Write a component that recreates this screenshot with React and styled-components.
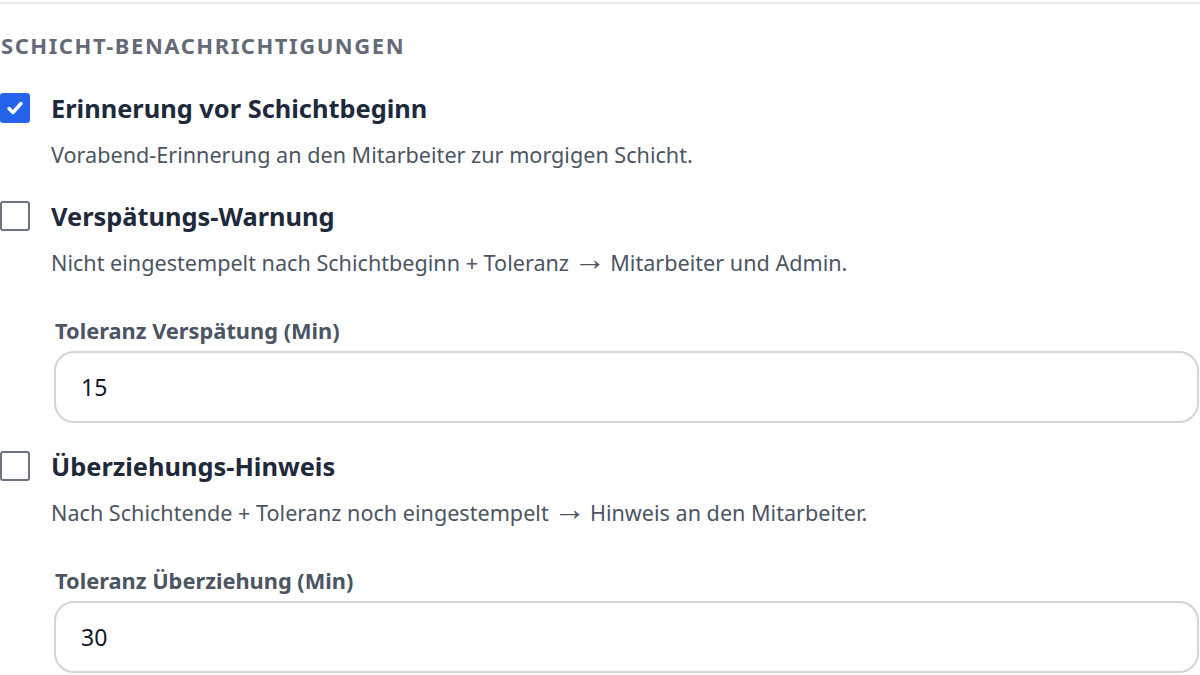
import React from "react";
import styled, { createGlobalStyle } from "styled-components";

const GlobalStyle = createGlobalStyle`
  html, body {
    margin: 0;
    padding: 0;
    background: #ffffff;
  }
  body {
    font-family: "Noto Sans", "Open Sans", sans-serif;
    color: #1f2937;
  }
`;

const Section = styled.section`
  width: 1200px;
  padding-top: 2px;
  box-sizing: border-box;
`;

const Divider = styled.div`
  border-top: 2px solid #e5e7eb;
`;

const Heading = styled.h3`
  margin: 27px 0 33px;
  font-size: 22px;
  line-height: 28px;
  font-weight: 700;
  letter-spacing: 1.55px;
  text-transform: uppercase;
  color: #646b78;
  padding-left: 1px;
`;

const Option = styled.div`
  display: flex;
  flex-direction: column;
  margin-bottom: ${(p) => p.$gapAfter}px;
`;

const OptionHead = styled.label`
  display: flex;
  align-items: center;
  gap: 21px;
  height: 32px;
  cursor: pointer;
`;

const Box = styled.span`
  width: 30px;
  height: 30px;
  box-sizing: border-box;
  flex: none;
  display: flex;
  align-items: center;
  justify-content: center;
  border-radius: 3px;
  border: 2px solid ${(p) => (p.$checked ? "#2563eb" : "#6b7280")};
  background: ${(p) => (p.$checked ? "#2563eb" : "#ffffff")};
`;

const Title = styled.span`
  font-size: 25.4px;
  line-height: 32px;
  font-weight: 700;
  color: #1e293b;
`;

const Description = styled.p`
  margin: 17px 0 0 51px;
  font-size: 21.6px;
  line-height: 28px;
  color: #4b5563;
`;

const Arrow = styled.span`
  line-height: 0;
  font-size: 1.5em;
  margin: 0 -1.2px;
  position: relative;
  top: -1px;
`;

const Field = styled.div`
  margin: 40px 0 0 54px;
  display: flex;
  flex-direction: column;
  gap: 6px;
`;

const FieldLabel = styled.label`
  font-size: 21.8px;
  line-height: 28px;
  font-weight: 700;
  color: #4b5563;
  padding-left: 1px;
`;

const NumberInput = styled.input`
  box-sizing: border-box;
  width: 1145px;
  height: 72px;
  border: 2px solid #d1d5db;
  border-radius: 20px;
  padding: 0 25px;
  font-family: inherit;
  font-size: 23px;
  color: #111827;
  background: #ffffff;
  outline: none;
`;

function Check({ checked }) {
  return (
    <Box $checked={checked}>
      {checked && (
        <svg width="20" height="20" viewBox="0 0 20 20" fill="none">
          <path
            d="M4 10.5l4 4 8-9"
            stroke="#ffffff"
            strokeWidth="3.4"
            strokeLinecap="round"
            strokeLinejoin="round"
          />
        </svg>
      )}
    </Box>
  );
}

const options = [
  {
    title: "Erinnerung vor Schichtbeginn",
    text: ["Vorabend-Erinnerung an den Mitarbeiter zur morgigen Schicht."],
    checked: true,
    gapAfter: 31,
  },
  {
    title: "Verspätungs-Warnung",
    text: ["Nicht eingestempelt nach Schichtbeginn + Toleranz ", " Mitarbeiter und Admin."],
    checked: false,
    field: { label: "Toleranz Verspätung (Min)", value: "15" },
    gapAfter: 27,
  },
  {
    title: "Überziehungs-Hinweis",
    text: ["Nach Schichtende + Toleranz noch eingestempelt ", " Hinweis an den Mitarbeiter."],
    checked: false,
    field: { label: "Toleranz Überziehung (Min)", value: "30" },
    gapAfter: 0,
  },
];

export default function App() {
  return (
    <>
      <GlobalStyle />
      <Section>
        <Divider />
        <Heading>Schicht-Benachrichtigungen</Heading>
        {options.map((o) => (
          <Option key={o.title} $gapAfter={o.gapAfter}>
            <OptionHead>
              <Check checked={o.checked} />
              <Title>{o.title}</Title>
            </OptionHead>
            <Description>
              {o.text[0]}
              {o.text.length > 1 && (
                <>
                  <Arrow>→</Arrow>
                  {o.text[1]}
                </>
              )}
            </Description>
            {o.field && (
              <Field>
                <FieldLabel>{o.field.label}</FieldLabel>
                <NumberInput type="text" defaultValue={o.field.value} />
              </Field>
            )}
          </Option>
        ))}
      </Section>
    </>
  );
}
